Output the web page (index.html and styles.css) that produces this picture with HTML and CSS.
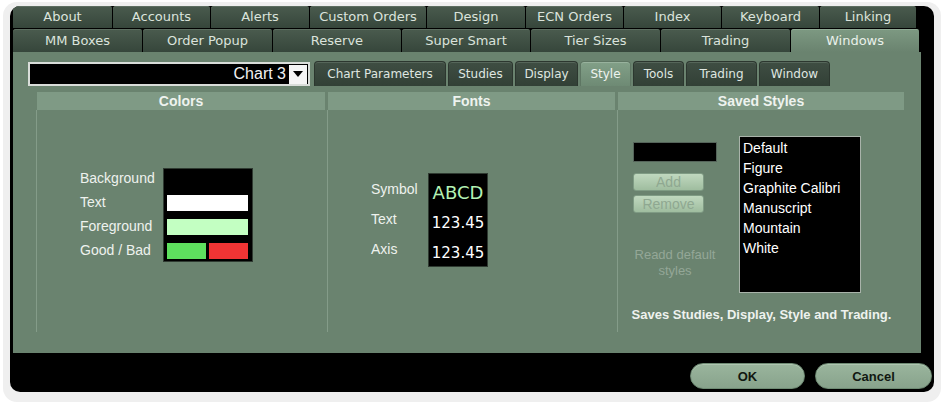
FILE: index.html
```html
<!DOCTYPE html>
<html lang="en">
<head>
    <meta charset="UTF-8">
    <title>Windows - Style</title>
    <link rel="stylesheet" href="styles.css">
</head>
<body>
    <div class="frame">
        <div class="window">
            <div class="tabs tabs-top">
                <div class="tab w100">About</div>
                <div class="tab w98">Accounts</div>
                <div class="tab w99">Alerts</div>
                <div class="tab w117">Custom Orders</div>
                <div class="tab w99">Design</div>
                <div class="tab w98">ECN Orders</div>
                <div class="tab w98">Index</div>
                <div class="tab w98">Keyboard</div>
                <div class="tab w97">Linking</div>
            </div>
            <div class="tabs tabs-bottom">
                <div class="tab w130">MM Boxes</div>
                <div class="tab w130">Order Popup</div>
                <div class="tab w129">Reserve</div>
                <div class="tab w129">Super Smart</div>
                <div class="tab w130">Tier Sizes</div>
                <div class="tab w130">Trading</div>
                <div class="tab w129 active">Windows</div>
            </div>

            <div class="panel">
                <div class="toolbar">
                    <div class="chart-select">
                        <span class="chart-name">Chart 3</span>
                        <span class="select-arrow">
                            <svg width="10" height="6" viewBox="0 0 10 6"><path d="M0 0h10L5 6z" fill="#000"/></svg>
                        </span>
                    </div>
                    <div class="subtabs">
                        <div class="subtab s132">Chart Parameters</div>
                        <div class="subtab s65">Studies</div>
                        <div class="subtab s63">Display</div>
                        <div class="subtab s51 active">Style</div>
                        <div class="subtab s51">Tools</div>
                        <div class="subtab s71">Trading</div>
                        <div class="subtab s71">Window</div>
                    </div>
                </div>

                <div class="sections">
                    <div class="section">
                        <div class="section-head">Colors</div>
                        <div class="section-body colors">
                            <div class="labels">
                                <div>Background</div>
                                <div>Text</div>
                                <div>Foreground</div>
                                <div>Good / Bad</div>
                            </div>
                            <div class="swatches">
                                <div class="swatch-row"></div>
                                <div class="swatch-row"><span class="bar white"></span></div>
                                <div class="swatch-row"><span class="bar mint"></span></div>
                                <div class="swatch-row split"><span class="bar good"></span><span class="bar bad"></span></div>
                            </div>
                        </div>
                    </div>

                    <div class="section">
                        <div class="section-head">Fonts</div>
                        <div class="section-body fonts">
                            <div class="labels">
                                <div>Symbol</div>
                                <div>Text</div>
                                <div>Axis</div>
                            </div>
                            <div class="font-preview">
                                <div class="symbol">ABCD</div>
                                <div>123.45</div>
                                <div>123.45</div>
                            </div>
                        </div>
                    </div>

                    <div class="section">
                        <div class="section-head">Saved Styles</div>
                        <div class="section-body saved">
                            <div class="saved-row">
                                <div class="saved-controls">
                                    <div class="name-input"></div>
                                    <button class="soft-btn first" disabled>Add</button>
                                    <button class="soft-btn" disabled>Remove</button>
                                    <div class="readd">Readd default styles</div>
                                </div>
                                <ul class="style-list">
                                    <li>Default</li>
                                    <li>Figure</li>
                                    <li>Graphite Calibri</li>
                                    <li>Manuscript</li>
                                    <li>Mountain</li>
                                    <li>White</li>
                                </ul>
                            </div>
                            <div class="note">Saves Studies, Display, Style and Trading.</div>
                        </div>
                    </div>
                </div>
            </div>

            <div class="footer">
                <button class="pill ok">OK</button>
                <button class="pill cancel">Cancel</button>
            </div>
        </div>
    </div>
</body>
</html>
```

FILE: styles.css
```css
body {
    margin: 0;
    background: #ffffff;
    font-family: "Liberation Sans", Arial, sans-serif;
}
.frame {
    width: 924px;
    height: 386px;
    margin: 2px 0 0 3px;
    padding: 4px 7px 10px 7px;
    background: #efefef;
    border-radius: 14px;
}
.window {
    height: 386px;
    background: #000;
    border-radius: 10px;
    overflow: hidden;
}

/* top level tabs */
.tabs {
    display: flex;
    margin-left: 3px;
}
.tabs-top {
    height: 22px;
    margin-bottom: 1px;
}
.tabs-bottom {
    height: 23px;
}
.tab {
    box-sizing: border-box;
    border-right: 1px solid #000;
    border-radius: 3px 3px 0 0;
    background: linear-gradient(#4a5b4e, #36463b);
    box-shadow: inset 0 1px 0 #5d6e61;
    color: #dbe3dc;
    font-family: "DejaVu Sans", Verdana, sans-serif;
    font-size: 13px;
    text-align: center;
    line-height: 22px;
}
.tabs-bottom .tab {
    line-height: 23px;
}
.tab.active {
    background: linear-gradient(#7d9982, #6a836f);
    box-shadow: inset 0 1px 0 #90aa95;
    color: #e9f0ea;
}
.w97 { width: 97px; }
.w98 { width: 98px; }
.w99 { width: 99px; }
.w100 { width: 100px; }
.w117 { width: 117px; }
.w129 { width: 129px; }
.w130 { width: 130px; }

/* main green panel */
.panel {
    width: 908px;
    height: 301px;
    box-sizing: border-box;
    margin-left: 3px;
    padding: 9px 0 0 15px;
    background: #6a836f;
}
.toolbar {
    display: flex;
    align-items: flex-start;
    gap: 4px;
}
.chart-select {
    width: 282px;
    height: 24px;
    box-sizing: border-box;
    margin-top: 1px;
    border: 2px solid #d9ddd9;
    background: #000;
    display: flex;
    align-items: center;
    justify-content: flex-end;
}
.chart-name {
    color: #f2f2f2;
    font-size: 16px;
    margin-right: 3px;
}
.select-arrow {
    width: 18px;
    height: 19px;
    background: #f4f4f4;
    display: flex;
    align-items: center;
    justify-content: center;
    margin-right: 1px;
}
.subtabs {
    display: flex;
    gap: 2px;
}
.subtab {
    height: 25px;
    box-sizing: border-box;
    border: 1px solid #2c372f;
    border-bottom: none;
    border-radius: 4px 4px 0 0;
    background: linear-gradient(#3f4e43, #324036);
    box-shadow: inset 0 1px 0 #56665a;
    color: #dfe6e0;
    font-family: "DejaVu Sans", Verdana, sans-serif;
    font-size: 12px;
    line-height: 24px;
    text-align: center;
}
.subtab.active {
    background: linear-gradient(#82a088, #6e8a74);
    box-shadow: inset 0 1px 0 #98b29d;
    border-color: #5e7663;
    color: #eef3ef;
}
.s51 { width: 51px; }
.s63 { width: 63px; }
.s65 { width: 65px; }
.s71 { width: 71px; }
.s132 { width: 132px; }

/* three option columns */
.sections {
    display: grid;
    grid-template-columns: 290px 289px 288px;
    gap: 1px;
    margin: 6px 0 0 8px;
}
.section-head {
    height: 18px;
    margin: 0 1px;
    background: #7f9a85;
    color: #eef3ef;
    font-weight: bold;
    font-size: 14px;
    line-height: 18px;
    text-align: center;
}
.section-body {
    height: 222px;
    box-sizing: border-box;
    border-left: 1px solid #849c89;
    color: #eef2ee;
    font-size: 14px;
}

.colors {
    display: flex;
    padding: 58px 0 0 43px;
}
.colors .labels {
    width: 83px;
    margin-top: -2px;
}
.colors .labels div {
    height: 24px;
    line-height: 24px;
}
.swatches {
    width: 90px;
    height: 94px;
    box-sizing: border-box;
    padding: 0 4px 0 3px;
    background: #000;
    border: 1px solid #2f3a31;
}
.swatch-row {
    height: 24px;
    display: flex;
    gap: 3px;
}
.bar {
    flex: 1;
    height: 16px;
    margin-top: 2px;
}
.white { background: #ffffff; }
.mint { background: #c3ffc2; }
.good { background: #5ee05e; }
.bad { background: #f03434; }

.fonts {
    display: flex;
    padding: 63px 0 0 43px;
}
.fonts .labels {
    width: 57px;
    margin-top: 1px;
}
.fonts .labels div {
    height: 30px;
    line-height: 30px;
}
.font-preview {
    width: 60px;
    height: 94px;
    box-sizing: border-box;
    padding-top: 4px;
    background: #000;
    border: 1px solid #2f3a31;
    color: #ffffff;
    font-family: "DejaVu Sans", sans-serif;
    font-size: 15px;
    text-align: center;
}
.font-preview div {
    height: 30px;
    line-height: 30px;
}
.font-preview .symbol {
    color: #b4f2b4;
    font-size: 18px;
}

.saved {
    padding: 26px 0 0 15px;
}
.saved-row {
    display: flex;
    align-items: flex-start;
    gap: 22px;
}
.saved-controls {
    width: 84px;
    margin-top: 6px;
}
.name-input {
    height: 20px;
    box-sizing: border-box;
    background: #000;
    border: 1px solid #55645a;
}
.soft-btn {
    display: block;
    width: 71px;
    height: 18px;
    margin-top: 4px;
    padding: 0;
    border: 1px solid #7f9b84;
    border-radius: 3px;
    background: linear-gradient(#c0d8bf, #9fbd9f);
    color: #8fa891;
    font-family: "Liberation Sans", Arial, sans-serif;
    font-size: 14px;
    line-height: 16px;
}
.soft-btn.first {
    margin-top: 11px;
}
.readd {
    margin-top: 34px;
    color: #94a797;
    font-size: 13px;
    line-height: 16px;
    text-align: center;
}
.style-list {
    list-style: none;
    width: 122px;
    height: 157px;
    box-sizing: border-box;
    margin: 0;
    padding: 1px 0 0 3px;
    background: #000;
    border: 1px solid #a9b3aa;
    color: #ffffff;
}
.style-list li {
    height: 20px;
    line-height: 20px;
}
.note {
    margin: 15px 0 0 -15px;
    color: #eef2ee;
    font-weight: bold;
    font-size: 13px;
    line-height: 14px;
    text-align: center;
}

/* bottom buttons */
.footer {
    display: flex;
    justify-content: flex-end;
    gap: 10px;
    padding: 10px 2px 0 0;
}
.pill {
    height: 26px;
    padding: 0;
    border: 1px solid #6f8b74;
    border-radius: 13px;
    background: linear-gradient(#9ab59d, #88a38c);
    box-shadow: inset 0 1px 0 #aec5b0;
    color: #111811;
    font-family: "Liberation Sans", Arial, sans-serif;
    font-weight: bold;
    font-size: 13px;
}
.ok { width: 115px; }
.cancel { width: 117px; }
```
